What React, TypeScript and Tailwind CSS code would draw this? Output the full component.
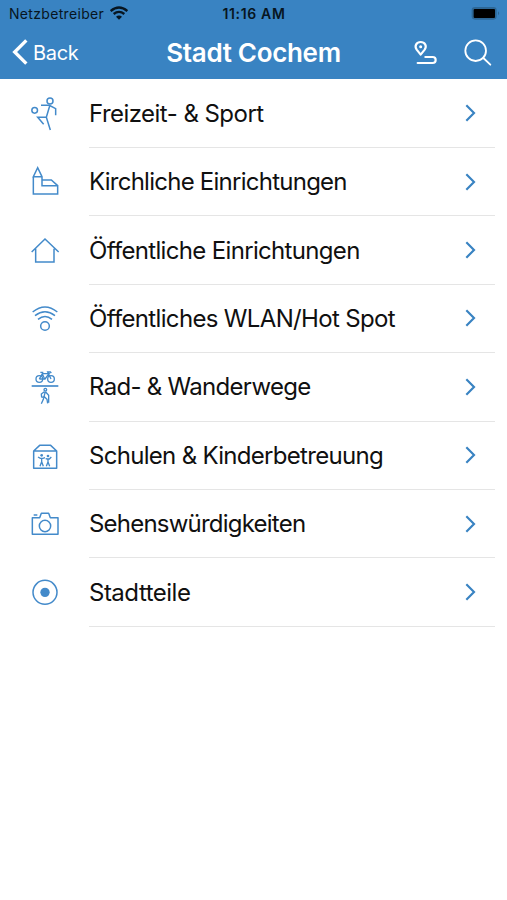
import React from 'react';

const FreizeitIcon = () => (
  <svg viewBox="0 -3 150 150" className="size-[50px]" fill="none" stroke="currentColor" strokeWidth="4.5">
    <circle cx="90" cy="33" r="9" />
    <circle cx="44" cy="61" r="8.5" />
    <path d="M63 46h25l19 10v20M89 48l-10 34 12 38M80 82H53l18 21" />
  </svg>
);

const KircheIcon = () => (
  <svg viewBox="0 -4 150 150" className="size-[50px]" fill="none" stroke="currentColor" strokeWidth="4.5">
    <path d="M40 55v52h73V82H66V55L53 28 40 55h26M66 65h28l19 17" />
  </svg>
);

const HausIcon = () => (
  <svg viewBox="0 -1 150 150" className="size-[50px]" fill="none" stroke="currentColor" strokeWidth="4.5">
    <path d="M35 77l40-39 41 39M47 67v40h55V67" />
  </svg>
);

const WlanIcon = () => (
  <svg viewBox="0 202 150 150" className="size-[50px]" fill="none" stroke="currentColor" strokeWidth="4.5">
    <path d="M38 256q37-30 74 0M45 267q30-23 60 0M54 278q21-17 42 0" />
    <circle cx="75" cy="298" r="13" />
  </svg>
);

const RadIcon = () => (
  <svg viewBox="0 0 150 150" className="size-[50px]" fill="none" stroke="currentColor" strokeWidth="4">
    <circle cx="58" cy="51" r="10" />
    <circle cx="93" cy="51" r="10" />
    <path d="M58 51l9-16h20l-12 16H58M61 31h9M66 34l8 17M93 51L83 30h8l3 3" />
    <path d="M35 72h80" strokeWidth="5" />
    <circle cx="76" cy="83" r="4" />
    <path d="M73 89l-9 7 1 10M76 89l-4 15-2 8-6 13M73 104l8 8 2 12M77 90l9 10v22M65 105l8 1" />
  </svg>
);

const SchuleIcon = () => (
  <svg viewBox="0 -3 150 150" className="size-[50px]" fill="none" stroke="currentColor" strokeWidth="4.5">
    <path d="M41 57h69v52H41zM41 57l18-17h33l18 17" strokeLinejoin="round" />
    <circle cx="65" cy="70" r="4" fill="currentColor" stroke="none" />
    <circle cx="84" cy="72" r="4" fill="currentColor" stroke="none" />
    <path d="M54 75l7 4h8l6-2M65 77v14M65 89l-5 14M65 89l5 14M77 80l5 1h6l6-6M84 79v13M84 90l-5 13M84 90l5 13" strokeWidth="4" />
  </svg>
);

const KameraIcon = () => (
  <svg viewBox="0 -4 150 150" className="size-[50px]" fill="none" stroke="currentColor" strokeWidth="4.5">
    <path d="M37 52h22l5-13h22l5 13h23v50H37zM41 44h11" strokeLinejoin="round" />
    <circle cx="75" cy="77" r="17" />
  </svg>
);

const StadtteilIcon = () => (
  <svg viewBox="0 203 150 150" className="size-[50px]" fill="none" stroke="currentColor" strokeWidth="4.5">
    <circle cx="75" cy="276" r="36" />
    <circle cx="75" cy="276" r="14" fill="currentColor" stroke="none" />
  </svg>
);

const entries = [
  { label: 'Freizeit- & Sport', Icon: FreizeitIcon, tracking: 'tracking-[-0.54px]' },
  { label: 'Kirchliche Einrichtungen', Icon: KircheIcon, tracking: 'tracking-[-0.75px]' },
  { label: 'Öffentliche Einrichtungen', Icon: HausIcon, tracking: 'tracking-[-0.67px]' },
  { label: 'Öffentliches WLAN/Hot Spot', Icon: WlanIcon, tracking: 'tracking-[-0.66px]' },
  { label: 'Rad- & Wanderwege', Icon: RadIcon, tracking: 'tracking-[-0.7px]' },
  { label: 'Schulen & Kinderbetreuung', Icon: SchuleIcon, tracking: 'tracking-[-0.7px]' },
  { label: 'Sehenswürdigkeiten', Icon: KameraIcon, tracking: 'tracking-[-0.78px]' },
  { label: 'Stadtteile', Icon: StadtteilIcon, tracking: 'tracking-[-0.5px]' },
];

const StatusBar = () => (
  <div className="grid h-[27px] grid-cols-3 items-center text-[#071521]">
    <div className="flex items-center gap-[6px] pl-[9px]">
      <span className="text-[14px] leading-none tracking-[0.32px]">Netzbetreiber</span>
      <svg viewBox="0 0 54 42" className="mb-[2px] h-[14px] w-[18px]" fill="none" stroke="currentColor" strokeWidth="7">
        <path d="M2 15Q27-6 52 15M11 24q16-13 32 0" />
        <path d="M27 41l-9-9q9-7 18 0z" fill="currentColor" stroke="none" />
      </svg>
    </div>
    <span className="pl-px text-center text-[14px] font-semibold leading-none tracking-[0.65px]">11:16 AM</span>
    <svg viewBox="0 0 90 42" className="h-[14px] w-[30px] justify-self-end mr-[6px] mb-[2px]">
      <rect x="2" y="3" width="75" height="38" rx="10" fill="#2d6796" />
      <rect x="8" y="9" width="64" height="27" rx="3" fill="black" />
      <path d="M81 16q7 6 0 12z" fill="#2d6796" />
    </svg>
  </div>
);

const NavigationBar = () => (
  <div className="grid h-[52px] grid-cols-[1fr_auto_1fr] items-center text-white">
    <button className="flex items-center gap-[5px] pl-[12px] text-left">
      <svg viewBox="0 0 48 78" className="mb-[2px] h-[26px] w-4" fill="none" stroke="white" strokeWidth="10" strokeLinecap="butt" strokeLinejoin="miter">
        <path d="M43 4L8 39l35 35" />
      </svg>
      <span className="mb-px text-[20px] leading-none tracking-[-0.3px]">Back</span>
    </button>
    <h1 className="text-[26px] font-semibold leading-none tracking-[-0.32px]">Stadt Cochem</h1>
    <div className="flex justify-end pr-[15px]">
      <svg viewBox="36 117 78 78" className="mr-[26px] size-[26px]" fill="none" stroke="white" strokeWidth="6.5" strokeLinecap="round">
        <path d="M62 164L50 149C42 137 50 126 62 126s20 11 12 23z" strokeLinejoin="round" />
        <circle cx="62" cy="140" r="4.5" fill="white" stroke="none" />
        <path d="M76 171h22q9 0 9 9t-9 9H53" />
      </svg>
      <svg viewBox="0 0 84 84" className="size-[28px]" fill="none" stroke="white" strokeWidth="5.5" strokeLinecap="round">
        <circle cx="35" cy="35" r="31" />
        <path d="M58 57l21 20" />
      </svg>
    </div>
  </div>
);

const App = () => {
  return (
    <div className="min-h-screen w-full bg-white font-['Inter','Liberation_Sans',sans-serif]">
      <header className="bg-[#3983c2]">
        <StatusBar />
        <NavigationBar />
      </header>

      <ul className="pt-[0.6px]">
        {entries.map(({ label, Icon, tracking }) => (
          <li key={label} className="flex h-[68.4px] items-center pl-5 pr-3">
            <span className="shrink-0 text-[#438aca]">
              <Icon />
            </span>
            <div className="ml-[19px] flex h-full grow items-center justify-between border-b border-[#e5e5e5] pr-[19px]">
              <span className={`mt-px whitespace-nowrap text-[24px] leading-none text-[#101010] ${tracking}`}>{label}</span>
              <svg viewBox="0 0 33 54" className="h-[18px] w-[11px] text-[#3983c2]" fill="none" stroke="currentColor" strokeWidth="6.5">
                <path d="M4 4l23 23L4 50" />
              </svg>
            </div>
          </li>
        ))}
      </ul>
    </div>
  );
};

export default App;
